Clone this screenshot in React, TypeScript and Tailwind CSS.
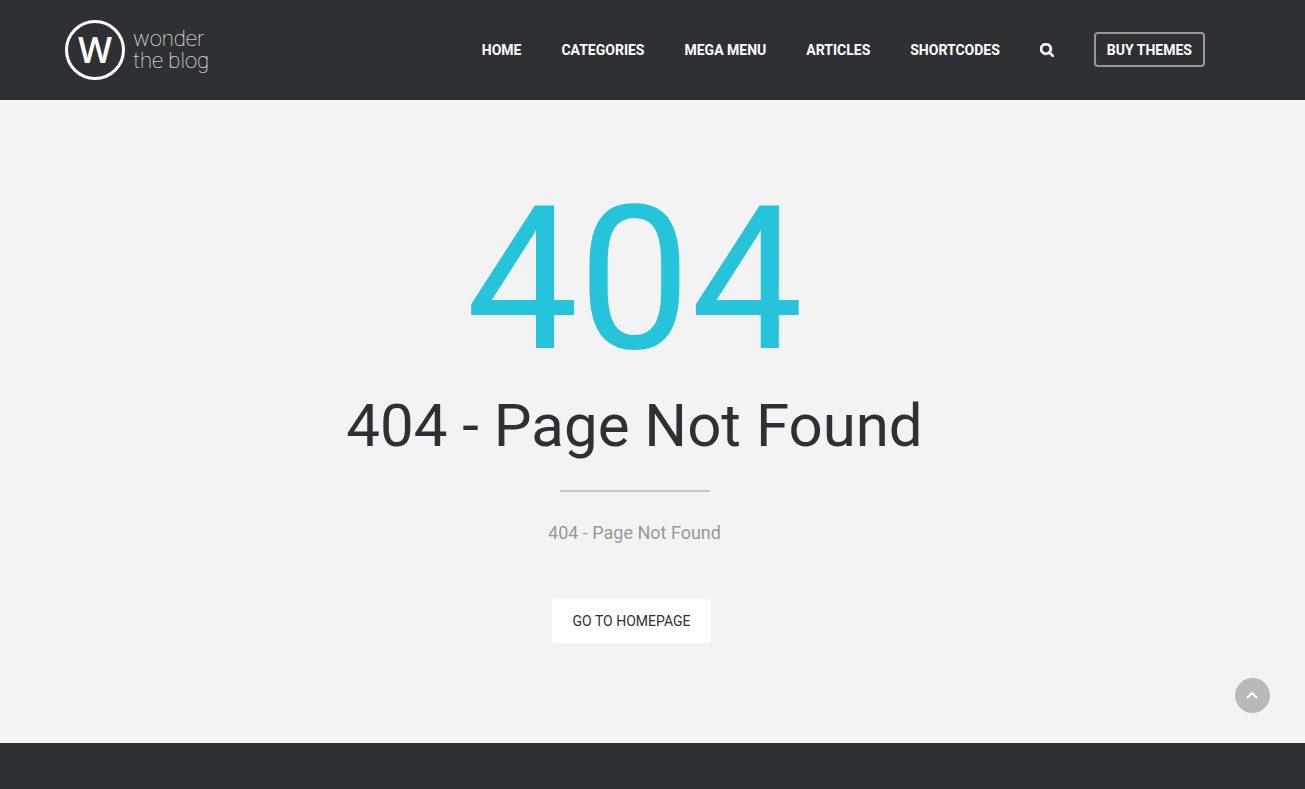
const navLinks = ["Home", "Categories", "Mega Menu", "Articles", "Shortcodes"];

function Logo() {
  return (
    <a href="#home" className="flex items-center gap-2 text-white">
      <span className="flex size-[60px] items-center justify-center rounded-full border-3 border-white font-['Open_Sans',sans-serif] text-4xl font-semibold">
        W
      </span>
      <span className="flex flex-col text-[22px] leading-[22px] font-thin">
        <span>wonder</span>
        <span>the blog</span>
      </span>
    </a>
  );
}

function SearchIcon() {
  return (
    <svg viewBox="0 128 1664 1664" fill="currentColor" stroke="currentColor" strokeWidth="70" className="size-[14px]">
      <path d="M1152 832q0-185-131.500-316.500t-316.500-131.500-316.500 131.500-131.500 316.500 131.500 316.500 316.500 131.500 316.500-131.500 131.500-316.500zM1664 1664q0 52-38 90t-90 38q-54 0-90-38l-343-342q-179 124-399 124-143 0-273.500-55.500t-225-150-150-225-55.500-273.500 55.500-273.500 150-225 225-150 273.500-55.500 273.500 55.500 225 150 150 225 55.500 273.500q0 220-124 399l343 343q37 37 37 90z" />
    </svg>
  );
}

export default function App() {
  return (
    <div className="flex min-h-screen flex-col bg-[#2d3134] font-[Roboto,sans-serif]">
      <header className="flex h-[100px] items-center justify-between pr-[100px] pl-[65px]">
        <Logo />
        <nav className="flex items-center gap-10 pb-px text-sm font-bold text-white uppercase">
          {navLinks.map((label) => (
            <a key={label} href="#menu">
              {label}
            </a>
          ))}
          <button type="button" aria-label="Search">
            <SearchIcon />
          </button>
          <a
            href="#themes"
            className="flex h-[35px] items-center rounded-[4px] border-2 border-[#96989a] px-[11px]"
          >
            Buy Themes
          </a>
        </nav>
      </header>

      <main className="flex flex-col items-center bg-[#f3f3f3] pt-20 pr-9 pb-[100px]">
        <div className="text-[200px] leading-[200px] text-[#26c4da]">404</div>
        <h1 className="mt-[14px] text-[60px] leading-[64px] text-[#2d3134]">404 - Page Not Found</h1>
        <hr className="mt-8 w-[150px] border-t-2 border-[#c5c5c5]" />
        <p className="mt-7 text-lg leading-[26px] text-[#999]">404 - Page Not Found</p>
        <a
          href="#home"
          className="mt-[53px] mr-1.5 flex h-[44px] items-center rounded-[3px] bg-white px-[21px] text-sm text-[#2d3134] uppercase"
        >
          Go to homepage
        </a>
      </main>

      <button
        type="button"
        aria-label="Back to top"
        className="fixed right-[35px] bottom-[76px] flex size-[35px] items-center justify-center rounded-full bg-[#b9b9b9] text-white"
      >
        <svg viewBox="0 0 12 8" fill="none" stroke="currentColor" strokeWidth="2" className="mr-px mb-0.5 h-2 w-3">
          <path d="M1 7l5-5 5 5" />
        </svg>
      </button>
    </div>
  );
}
